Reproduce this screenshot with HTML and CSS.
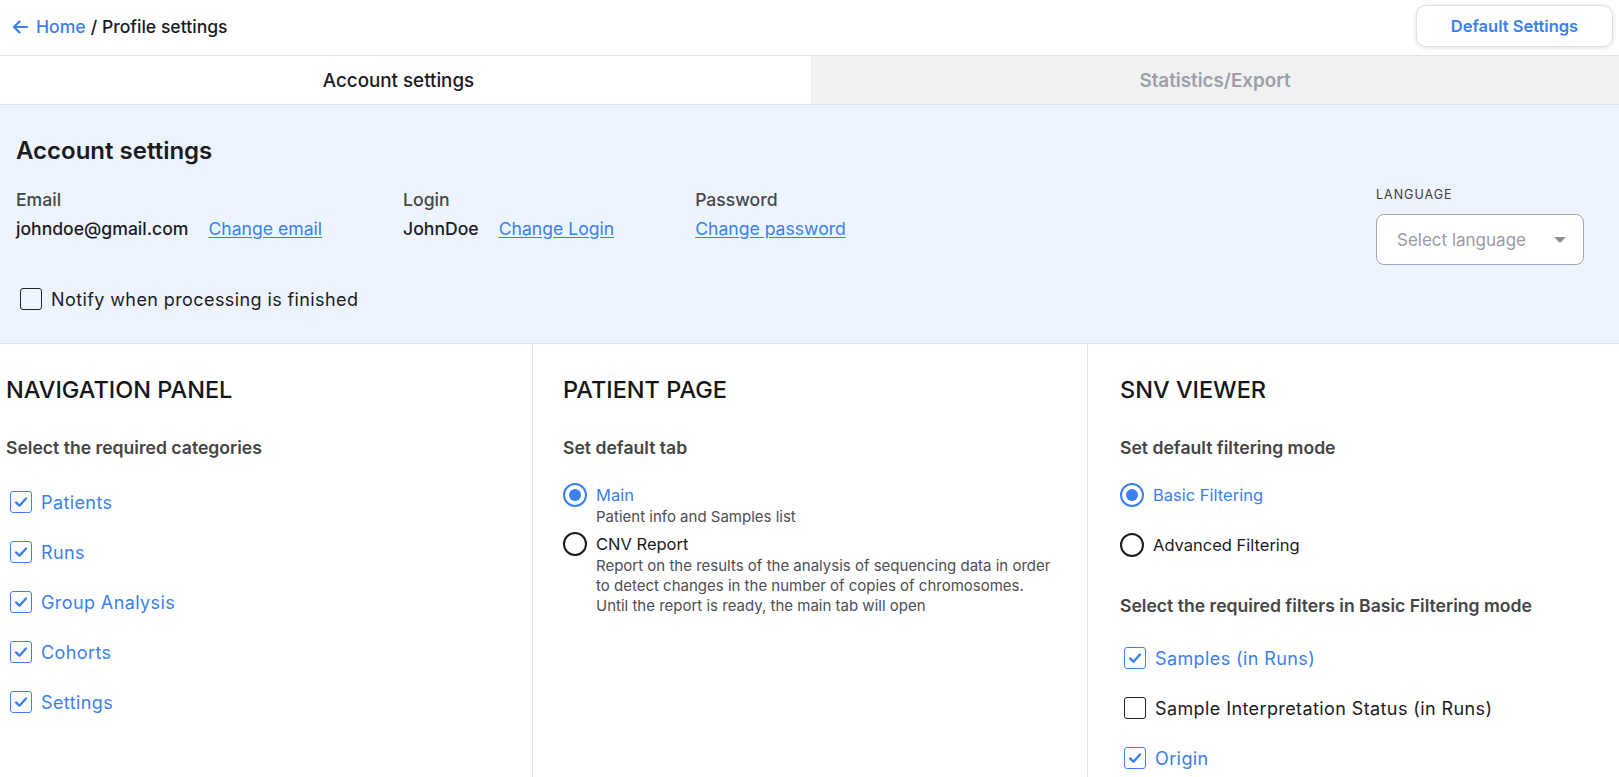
FILE: index.html
```html
<!DOCTYPE html>
<html lang="en">
<head>
<meta charset="utf-8">
<title>Profile settings</title>
<link rel="stylesheet" href="styles.css">
</head>
<body>
<header class="topbar">
  <div class="crumbs">
    <svg class="back" width="16" height="14" viewBox="0 0 16 14"><path d="M15 7H2M7.5 1.5L2 7l5.5 5.5" fill="none" stroke="#3b7ff0" stroke-width="2.2" stroke-linecap="round" stroke-linejoin="round"/></svg>
    <a class="home">Home</a><span class="sep">/ Profile settings</span>
  </div>
  <button class="btn-default">Default Settings</button>
</header>

<nav class="tabs">
  <div class="tab active">Account settings</div>
  <div class="tab">Statistics/Export</div>
</nav>

<section class="account">
  <div class="account-main">
    <h2 class="account-title">Account settings</h2>
    <div class="fields">
      <div class="field">
        <div class="field-label">Email</div>
        <div class="field-row"><span class="field-value">johndoe@gmail.com</span><a class="link">Change email</a></div>
      </div>
      <div class="field">
        <div class="field-label">Login</div>
        <div class="field-row"><span class="field-value">JohnDoe</span><a class="link">Change Login</a></div>
      </div>
      <div class="field">
        <div class="field-label">Password</div>
        <div class="field-row"><a class="link">Change password</a></div>
      </div>
    </div>
    <label class="check notify"><span class="box"></span><span class="check-text">Notify when processing is finished</span></label>
  </div>
  <div class="lang">
    <div class="lang-label">LANGUAGE</div>
    <div class="select"><span>Select language</span><span class="caret"></span></div>
  </div>
</section>

<section class="columns">
  <div class="col col-nav">
    <h3 class="col-title">NAVIGATION PANEL</h3>
    <div class="col-sub">Select the required categories</div>
    <div class="list">
      <label class="check on"><span class="box"><svg viewBox="0 0 22 22"><path d="M5.5 11.5l3.8 3.6L16.5 7.2" fill="none" stroke="#3b7ff0" stroke-width="2.6" stroke-linecap="round" stroke-linejoin="round"/></svg></span><span class="check-text">Patients</span></label>
      <label class="check on"><span class="box"><svg viewBox="0 0 22 22"><path d="M5.5 11.5l3.8 3.6L16.5 7.2" fill="none" stroke="#3b7ff0" stroke-width="2.6" stroke-linecap="round" stroke-linejoin="round"/></svg></span><span class="check-text">Runs</span></label>
      <label class="check on"><span class="box"><svg viewBox="0 0 22 22"><path d="M5.5 11.5l3.8 3.6L16.5 7.2" fill="none" stroke="#3b7ff0" stroke-width="2.6" stroke-linecap="round" stroke-linejoin="round"/></svg></span><span class="check-text">Group Analysis</span></label>
      <label class="check on"><span class="box"><svg viewBox="0 0 22 22"><path d="M5.5 11.5l3.8 3.6L16.5 7.2" fill="none" stroke="#3b7ff0" stroke-width="2.6" stroke-linecap="round" stroke-linejoin="round"/></svg></span><span class="check-text">Cohorts</span></label>
      <label class="check on"><span class="box"><svg viewBox="0 0 22 22"><path d="M5.5 11.5l3.8 3.6L16.5 7.2" fill="none" stroke="#3b7ff0" stroke-width="2.6" stroke-linecap="round" stroke-linejoin="round"/></svg></span><span class="check-text">Settings</span></label>
    </div>
  </div>

  <div class="col col-patient">
    <h3 class="col-title">PATIENT PAGE</h3>
    <div class="col-sub">Set default tab</div>
    <div class="radios">
      <div class="radio on">
        <span class="dot"></span>
        <div class="radio-body">
          <div class="radio-label">Main</div>
          <div class="radio-desc">Patient info and Samples list</div>
        </div>
      </div>
      <div class="radio">
        <span class="dot"></span>
        <div class="radio-body">
          <div class="radio-label">CNV Report</div>
          <div class="radio-desc">Report on the results of the analysis of sequencing data in order to detect changes in the number of copies of chromosomes. Until the report is ready, the main tab will open</div>
        </div>
      </div>
    </div>
  </div>

  <div class="col col-snv">
    <h3 class="col-title">SNV VIEWER</h3>
    <div class="col-sub">Set default filtering mode</div>
    <div class="radios spaced">
      <div class="radio on"><span class="dot"></span><div class="radio-label">Basic Filtering</div></div>
      <div class="radio"><span class="dot"></span><div class="radio-label">Advanced Filtering</div></div>
    </div>
    <div class="col-sub sub2">Select the required filters in Basic Filtering mode</div>
    <div class="list">
      <label class="check on"><span class="box"><svg viewBox="0 0 22 22"><path d="M5.5 11.5l3.8 3.6L16.5 7.2" fill="none" stroke="#3b7ff0" stroke-width="2.6" stroke-linecap="round" stroke-linejoin="round"/></svg></span><span class="check-text">Samples (in Runs)</span></label>
      <label class="check"><span class="box"></span><span class="check-text">Sample Interpretation Status (in Runs)</span></label>
      <label class="check on"><span class="box"><svg viewBox="0 0 22 22"><path d="M5.5 11.5l3.8 3.6L16.5 7.2" fill="none" stroke="#3b7ff0" stroke-width="2.6" stroke-linecap="round" stroke-linejoin="round"/></svg></span><span class="check-text">Origin</span></label>
    </div>
  </div>
</section>
</body>
</html>
```

FILE: styles.css
```css
* { box-sizing: border-box; }

html, body {
  margin: 0;
  padding: 0;
  background: #ffffff;
  font-family: Inter, "Noto Sans", sans-serif;
  color: #1b1b1f;
  overflow: hidden;
}

.topbar {
  height: 56px;
  display: flex;
  align-items: center;
  justify-content: space-between;
  padding: 0 6px 0 12px;
  border-bottom: 1px solid #e2e3ea;
}

.crumbs {
  display: flex;
  align-items: center;
  font-size: 17.6px;
  font-weight: 500;
  margin-top: -2px;
}

.back { margin-right: 8px; }

.home { color: #3b7ff0; margin-right: 5px; }

.sep { color: #1b1b1f; }

.btn-default {
  width: 197px;
  height: 42px;
  background: #fff;
  border: 1px solid #dcdfe8;
  border-radius: 10px;
  box-shadow: 0 1px 4px rgba(40, 50, 80, 0.14);
  color: #3b7ff0;
  font-family: inherit;
  font-size: 16.5px;
  font-weight: 600;
  margin-top: -4px;
}

.tabs {
  display: grid;
  grid-template-columns: 811px 1fr;
  height: 49px;
  border-bottom: 1px solid #e2e3ea;
}

.tab {
  display: flex;
  align-items: center;
  justify-content: center;
  font-size: 18.8px;
  font-weight: 600;
  color: #9d9dab;
  background: #f1f1f1;
}

.tab.active {
  background: #fff;
  color: #1b1b1f;
  font-weight: 500;
  padding-right: 14px;
}

.account {
  display: flex;
  background: #eef4fe;
  padding: 31px 35px 33px 16px;
  border-bottom: 1px solid #e0e3ea;
}

.account-main { flex: 1; }

.account-title {
  margin: 0;
  font-size: 24px;
  line-height: 30px;
  font-weight: 600;
}

.fields {
  display: flex;
  gap: 81px;
  margin-top: 23px;
}

.field-label {
  font-size: 17.6px;
  line-height: 22px;
  font-weight: 500;
  color: #474747;
}

.field-row {
  display: flex;
  align-items: center;
  gap: 20px;
  margin-top: 7px;
  line-height: 22px;
}

.field-value {
  font-size: 17.6px;
  font-weight: 500;
  color: #1b1b1f;
}

.link {
  font-size: 17.6px;
  color: #3b7ff0;
  text-decoration: underline;
  text-underline-offset: 2px;
}

.check {
  display: flex;
  align-items: center;
  gap: 9px;
  height: 22px;
}

.box {
  width: 22px;
  height: 22px;
  border: 1.8px solid #222;
  border-radius: 3px;
  display: flex;
  background: transparent;
  flex: none;
}

.box svg { width: 100%; height: 100%; }

.check.on .box { border-color: #3b7ff0; }

.check-text {
  font-size: 18px;
  letter-spacing: 0.4px;
  color: #1b1b1f;
}

.check.on .check-text { color: #3b7ff0; }

.notify {
  margin-top: 48px;
  margin-left: 4px;
}

.lang { padding-top: 51px; width: 208px; }

.lang-label {
  font-size: 12.5px;
  line-height: 16px;
  letter-spacing: 1px;
  color: #3a3a3a;
}

.select {
  margin-top: 11px;
  height: 51px;
  background: #fff;
  border: 1px solid #a4a4b2;
  border-radius: 8px;
  display: flex;
  align-items: center;
  justify-content: space-between;
  padding: 0 17px 0 20px;
  font-size: 17px;
  color: #9a9aa8;
}

.caret {
  width: 0;
  height: 0;
  border-left: 6px solid transparent;
  border-right: 6px solid transparent;
  border-top: 6px solid #8e8e9c;
}

.columns {
  display: grid;
  grid-template-columns: 533px 555px 1fr;
  height: 440px;
}

.col {
  padding-top: 32px;
  border-right: 1px solid #e2e3ea;
}

.col:last-child { border-right: none; }

.col-nav { padding-left: 6px; }
.col-patient { padding-left: 30px; }
.col-snv { padding-left: 32px; }

.col-title {
  margin: 0;
  font-size: 23.5px;
  line-height: 28px;
  font-weight: 500;
  color: #15161a;
}

.col-sub {
  margin-top: 34px;
  font-size: 17.6px;
  line-height: 20px;
  font-weight: 600;
  color: #454545;
}

.list {
  display: flex;
  flex-direction: column;
  gap: 28px;
  margin-top: 33px;
  padding-left: 4px;
}

.col-snv .list { margin-top: 31px; gap: 28px; }

.radios {
  display: flex;
  flex-direction: column;
  gap: 5px;
  margin-top: 25px;
}

.radios.spaced { gap: 26px; }

.radio {
  display: flex;
  align-items: flex-start;
  gap: 9px;
}

.dot {
  width: 24px;
  height: 24px;
  border-radius: 50%;
  border: 2px solid #1b1b1f;
  flex: none;
  position: relative;
}

.radio.on .dot { border-color: #3b7ff0; }

.radio.on .dot::after {
  content: "";
  position: absolute;
  left: 4px;
  top: 4px;
  width: 12px;
  height: 12px;
  border-radius: 50%;
  background: #3b7ff0;
}

.radio-label {
  font-size: 16.5px;
  line-height: 24px;
  font-weight: 400;
  color: #1b1b1f;
}

.radio.on .radio-label { color: #3b7ff0; }

.radio-desc {
  font-size: 15px;
  line-height: 20px;
  color: #4e4e55;
  max-width: 458px;
}

.col-sub.sub2 { margin-top: 39px; }
```
